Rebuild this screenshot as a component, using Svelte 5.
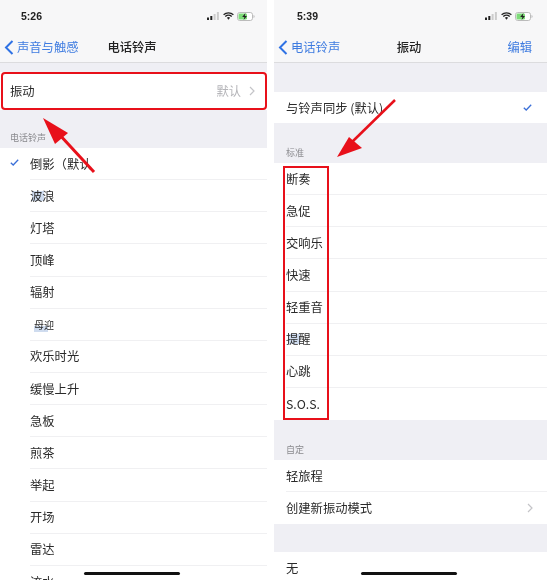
<script>
  const ringtones = ["倒影（默认", "波浪", "灯塔", "顶峰", "辐射", "母迎", "欢乐时光", "缓慢上升", "急板", "煎茶", "举起", "开场", "雷达", "流水"];
  const standard = ["断奏", "急促", "交响乐", "快速", "轻重音", "提醒", "心跳", "S.O.S."];
</script>

{#snippet status(time)}
  <div class="status">
    <span class="time">{time}</span>
    <div class="status-icons">
      <svg width="13" height="8" viewBox="0 0 13 8">
        <rect x="0" y="5.5" width="2" height="2.5" fill="#222" />
        <rect x="3.3" y="4" width="2" height="4" fill="#222" />
        <rect x="6.6" y="2" width="2" height="6" fill="#ccc" />
        <rect x="9.9" y="0" width="2" height="8" fill="#ccc" />
      </svg>
      <svg width="11" height="8" viewBox="0 0 11 8">
        <path d="M0.6 2.8 A7 7 0 0 1 10.4 2.8 M2.3 4.5 A4.6 4.6 0 0 1 8.7 4.5" fill="none" stroke="#222" stroke-width="1.3" />
        <path d="M3.9 5.8 A2.2 2.2 0 0 1 7.1 5.8 L5.5 7.8 Z" fill="#222" />
      </svg>
      <svg width="18" height="9" viewBox="0 0 18 9">
        <rect x="0.5" y="0.5" width="15" height="8" rx="2.2" fill="#fff" stroke="#bbb" />
        <rect x="1.5" y="1.5" width="8.5" height="6" rx="1.2" fill="#7ddb78" />
        <path d="M16.5 3 V6 A1.6 1.6 0 0 0 16.5 3 Z" fill="#bbb" />
        <path d="M8.4 1 L5.2 5 H7.4 L6.6 8 L10 4 H7.8 Z" fill="#222" />
      </svg>
    </div>
  </div>
{/snippet}

{#snippet chevron()}
  <svg class="chevron" width="6" height="10" viewBox="0 0 6 10">
    <path d="M1 1 L5 5 L1 9" fill="none" stroke="#c4c4c8" stroke-width="1.2" />
  </svg>
{/snippet}

{#snippet check()}
  <svg width="9" height="7" viewBox="0 0 9 7">
    <path d="M0.8 3.8 L3.2 6 L8.2 0.8" fill="none" stroke="#3a6fd8" stroke-width="1.3" />
  </svg>
{/snippet}

{#snippet back(label)}
  <div class="back">
    <svg width="10" height="15" viewBox="0 0 10 15">
      <path d="M8.5 1 L2 7.5 L8.5 14" fill="none" stroke="#2f72e4" stroke-width="2" />
    </svg>
    <span>{label}</span>
  </div>
{/snippet}

<main class="page">
  <section class="phone left">
    <header>
      {@render status("5:26")}
      <nav>
        {@render back("声音与触感")}
        <strong>电话铃声</strong>
        <span></span>
      </nav>
    </header>

    <div class="gap gap-top"></div>
    <div class="row tall">
      <span>振动</span>
      <span class="detail">默认 {@render chevron()}</span>
    </div>
    <div class="gap label-left">电话铃声</div>
    <ul class="list indented">
      {#each ringtones as name, i}
        <li>
          <span class="mark">{#if i === 0}{@render check()}{/if}</span>
          <span class="name" class:patched={name === "母迎"} class:tint={name === "波浪"}>{name}</span>
        </li>
      {/each}
    </ul>

    <div class="callout wide"></div>
    <svg class="arrow" width="267" height="200" viewBox="0 0 267 200">
      <path d="M94 172 L58 133" stroke="#e8101a" stroke-width="3" fill="none" />
      <path d="M43 118 L68 133 L55 144 Z" fill="#e8101a" />
    </svg>
    <div class="home"></div>
  </section>

  <section class="phone right">
    <header>
      {@render status("5:39")}
      <nav>
        {@render back("电话铃声")}
        <strong>振动</strong>
        <span class="edit">编辑</span>
      </nav>
    </header>

    <div class="gap gap-sync"></div>
    <div class="row">
      <span>与铃声同步 (默认)</span>
      {@render check()}
    </div>
    <div class="gap label-std">标准</div>
    <ul class="list">
      {#each standard as name}
        <li><span class="name" class:tint={name === "提醒"}>{name}</span></li>
      {/each}
    </ul>
    <div class="gap label-std">自定</div>
    <ul class="list">
      <li><span class="name">轻旅程</span></li>
      <li>
        <span class="name">创建新振动模式</span>
        {@render chevron()}
      </li>
    </ul>
    <div class="gap gap-none"></div>
    <div class="row">
      <span>无</span>
    </div>

    <div class="callout narrow"></div>
    <svg class="arrow" width="273" height="200" viewBox="0 0 273 200">
      <path d="M121 100 L77 143" stroke="#e8101a" stroke-width="2.5" fill="none" />
      <path d="M63 157 L75 137 L88 148 Z" fill="#e8101a" />
    </svg>
    <div class="home"></div>
  </section>
</main>

<style>
  :global(body) {
    background: #fff;
  }

  .page {
    display: flex;
    gap: 7px;
    width: 547px;
    height: 580px;
    overflow: hidden;
    font-family: "Noto Sans CJK SC", "Liberation Sans", sans-serif;
    font-size: 12.3px;
    color: #2a2a2a;
    filter: blur(0.35px);
  }

  .phone {
    position: relative;
    height: 580px;
    overflow: hidden;
    background: #fff;
  }

  .left {
    width: 267px;
  }

  .right {
    width: 273px;
  }

  header {
    background: #f7f7f8;
    border-bottom: 1px solid #dcdcde;
  }

  .status {
    display: flex;
    align-items: center;
    justify-content: space-between;
    height: 32px;
    padding: 0 12px 0 21px;
  }

  .right .status {
    padding: 0 14px 0 23px;
  }

  .time {
    font-family: "Liberation Sans", sans-serif;
    font-size: 10.5px;
    font-weight: 700;
    color: #222;
  }

  .status-icons {
    display: flex;
    align-items: center;
    gap: 3px;
  }

  nav {
    display: grid;
    grid-template-columns: 1fr auto 1fr;
    align-items: center;
    height: 30px;
    padding: 0 7px 0 4px;
  }

  nav strong {
    font-weight: 500;
    color: #222;
  }

  .back {
    display: flex;
    align-items: center;
    gap: 3px;
    color: #3f7ce0;
    white-space: nowrap;
  }

  .edit {
    justify-self: end;
    margin-right: 8px;
    color: #3f7ce0;
  }

  .gap {
    box-sizing: border-box;
    background: #efeff4;
    font-size: 9px;
    color: #8a8a8e;
    display: flex;
    align-items: flex-end;
  }

  .gap-top {
    height: 9px;
  }

  .gap-sync {
    height: 29px;
  }

  .gap-none {
    height: 28px;
  }

  .label-left {
    height: 38px;
    padding: 0 0 4px 10px;
  }

  .label-std {
    height: 40px;
    padding: 0 0 4px 12px;
  }

  .row {
    display: flex;
    align-items: center;
    justify-content: space-between;
    height: 31px;
    padding: 0 15px 0 12px;
    background: #fff;
  }

  .tall {
    height: 38px;
    padding: 0 12px 0 10px;
  }

  .detail {
    display: flex;
    align-items: center;
    gap: 8px;
    color: #b4b4b8;
  }

  .list {
    margin: 0;
    padding: 0 0 0 12px;
    list-style: none;
    background: #fff;
  }

  .list li {
    display: flex;
    align-items: center;
    justify-content: space-between;
    height: 32.15px;
    box-sizing: border-box;
    padding-right: 14px;
    border-bottom: 1px solid #f0f0f2;
  }

  .list li:last-child {
    border-bottom: 0;
  }

  .indented {
    padding-left: 30px;
  }

  .indented li {
    justify-content: flex-start;
    position: relative;
  }

  .mark {
    position: absolute;
    left: -20px;
    top: 11px;
    line-height: 0;
  }

  .patched {
    font-size: 10px;
    padding-left: 4px;
    background: linear-gradient(#fff 60%, #cfdcef 60%) no-repeat 4px 0 / 14px 100%;
  }

  .tint {
    background: linear-gradient(#cfdcef, #cfdcef) no-repeat 2px 4px / 12px 10px;
  }

  .callout {
    position: absolute;
    box-sizing: border-box;
    border: 2px solid #e8101a;
  }

  .wide {
    left: 1px;
    top: 72px;
    width: 266px;
    height: 38px;
    border-radius: 4px;
  }

  .narrow {
    left: 9px;
    top: 166px;
    width: 46px;
    height: 254px;
  }

  .arrow {
    position: absolute;
    left: 0;
    top: 0;
    pointer-events: none;
  }

  .home {
    position: absolute;
    left: 84px;
    top: 572px;
    width: 96px;
    height: 3px;
    border-radius: 2px;
    background: #111;
  }

  .right .home {
    left: 87px;
  }
</style>
